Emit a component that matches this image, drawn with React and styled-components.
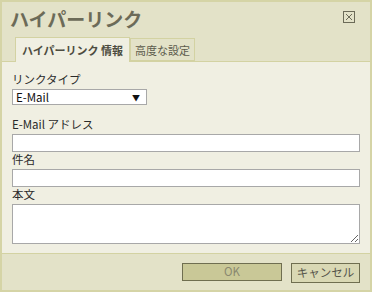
import React from "react";
import styled, { createGlobalStyle } from "styled-components";

const Global = createGlobalStyle`
  html, body { margin: 0; padding: 0; background: #fff; }
  body { font-family: "Noto Sans CJK JP", "Noto Sans", sans-serif; }
  * { box-sizing: border-box; }
`;

const Dialog = styled.div`
  width: 372px;
  height: 292px;
  border: 2px solid #d5d4a6;
  background: #e3e2c8;
  display: flex;
  flex-direction: column;
`;

const Header = styled.div`
  padding: 3px 15px 0 8px;
  display: flex;
  flex-direction: column;
`;

const TitleRow = styled.div`
  display: flex;
  justify-content: space-between;
  align-items: center;
  height: 28px;
`;

const Title = styled.h1`
  margin: 0;
  font-size: 19px;
  font-weight: bold;
  color: #6c6b58;
  line-height: 28px;
`;

const Close = styled.button`
  border: none;
  background: none;
  padding: 0;
  width: 12px;
  height: 12px;
  margin-top: -4px;
  display: flex;
`;

const Tabs = styled.div`
  display: flex;
  align-items: flex-end;
  margin: 4px 0 -1px 5px;
  height: 25px;
  position: relative;
  z-index: 1;
`;

const Tab = styled.div`
  height: ${(p) => (p.$active ? 25 : 23)}px;
  padding: 0 ${(p) => (p.$active ? 6 : 4)}px;
  border: 1px solid #d3d2a2;
  border-bottom: ${(p) => (p.$active ? "none" : "1px solid #d3d2a2")};
  margin-bottom: ${(p) => (p.$active ? 0 : 1)}px;
  background: ${(p) => (p.$active ? "#f0efe2" : "#e3e2c8")};
  color: ${(p) => (p.$active ? "#4d4c40" : "#5c5b4c")};
  font-size: 11px;
  font-weight: ${(p) => (p.$active ? "bold" : "normal")};
  display: flex;
  align-items: center;
  white-space: nowrap;
`;

const Body = styled.div`
  flex: 1;
  background: #f0efe2;
  border-top: 1px solid #d3d2a2;
  padding: 10px 8px 0 10px;
  display: flex;
  flex-direction: column;
`;

const Label = styled.label`
  font-size: 11.5px;
  color: #2a2a2a;
  line-height: 15px;
  margin-top: ${(p) => p.$gap || 0}px;
  display: block;
`;

const Select = styled.div`
  width: 135px;
  height: 16px;
  margin-top: 2px;
  background: #fff;
  border: 1px solid #a8a8a8;
  display: flex;
  align-items: center;
  justify-content: space-between;
  padding: 0 6px 0 3px;
  font-size: 11.5px;
  color: #111;
`;

const Arrow = styled.span`
  font-size: 8px;
  color: #111;
`;

const Input = styled.input`
  display: block;
  width: 348px;
  height: 18px;
  margin: 2px 0 0;
  border: 1px solid #a8a8a8;
  background: #fff;
  padding: 0 2px;
  outline: none;
`;

const Area = styled.textarea`
  display: block;
  width: 348px;
  height: 40px;
  margin: 2px 0 0;
  border: 1px solid #a8a8a8;
  background: #fff;
  padding: 2px;
  resize: both;
  outline: none;
`;

const Footer = styled.div`
  height: 37px;
  border-top: 1px solid #d3d2a2;
  display: flex;
  justify-content: flex-end;
  align-items: flex-start;
  gap: 9px;
  padding: 8px 10px 0 0;
`;

const Button = styled.button`
  height: ${(p) => (p.$primary ? 18 : 20)}px;
  width: ${(p) => (p.$primary ? 100 : 69)}px;
  border: 1px solid #6f6e50;
  background: ${(p) => (p.$primary ? "#c9c897" : "#d9d8b4")};
  color: ${(p) => (p.$primary ? "#8a8970" : "#55544a")};
  font-family: "Noto Sans CJK JP", "Noto Sans", sans-serif;
  font-size: 11.5px;
  padding: 0;
  line-height: 1;
  margin-top: 1px;
`;

function CloseIcon() {
  return (
    <svg width="12" height="12" viewBox="0 0 12 12">
      <rect x="0.5" y="0.5" width="11" height="11" fill="none" stroke="#6c6b58" />
      <path d="M3 3 L9 9 M9 3 L3 9" stroke="#6c6b58" strokeWidth="1" />
    </svg>
  );
}

export default function App() {
  return (
    <>
      <Global />
      <Dialog>
        <Header>
          <TitleRow>
            <Title>ハイパーリンク</Title>
            <Close aria-label="閉じる">
              <CloseIcon />
            </Close>
          </TitleRow>
          <Tabs>
            <Tab $active>ハイパーリンク 情報</Tab>
            <Tab>高度な設定</Tab>
          </Tabs>
        </Header>
        <Body>
          <Label>リンクタイプ</Label>
          <Select>
            <span>E-Mail</span>
            <Arrow>▼</Arrow>
          </Select>
          <Label $gap={12}>E-Mail アドレス</Label>
          <Input />
          <Label>件名</Label>
          <Input />
          <Label>本文</Label>
          <Area />
        </Body>
        <Footer>
          <Button $primary>OK</Button>
          <Button>キャンセル</Button>
        </Footer>
      </Dialog>
    </>
  );
}
